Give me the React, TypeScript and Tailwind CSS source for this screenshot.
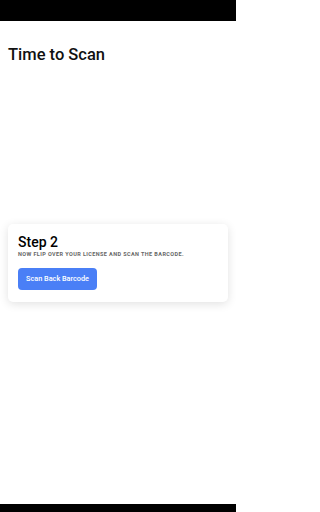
import React from 'react';

export default function App() {
  return (
    <div
      className="flex flex-col w-[236px] h-[512px] bg-white overflow-hidden"
      style={{ fontFamily: 'Roboto, "Liberation Sans", sans-serif' }}
    >
      {/* Status bar */}
      <div className="h-[21px] bg-black shrink-0" />

      {/* Header */}
      <h1 className="mt-[24px] px-[8px] text-[16.5px] leading-[20px] font-medium text-[#111]">
        Time to Scan
      </h1>

      {/* Step card */}
      <div className="mx-[8px] mt-[159px] rounded-[5px] bg-white px-[10px] pt-[10px] pb-[12px] shadow-[0_2px_10px_rgba(0,0,0,0.12)]">
        <h2 className="text-[14px] leading-[16px] font-medium text-black">Step 2</h2>
        <p className="mt-[1px] text-[5.5px] leading-[7px] font-bold uppercase tracking-[0.4px] text-[#666]">
          Now flip over your license and scan the barcode.
        </p>
        <button className="mt-[10px] h-[22px] px-[8px] rounded-[4px] bg-[#4a7ff6] text-white text-[7.3px] font-medium">
          Scan Back Barcode
        </button>
      </div>

      {/* Nav bar */}
      <div className="mt-auto h-[8px] bg-black shrink-0" />
    </div>
  );
}
